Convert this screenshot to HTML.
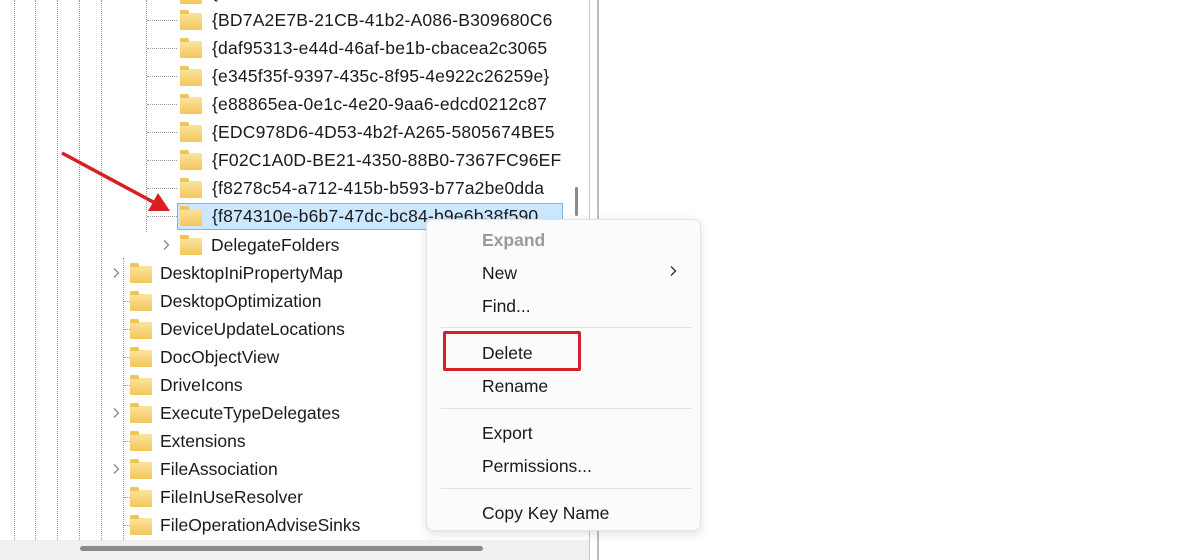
<!DOCTYPE html>
<html><head><style>
*{margin:0;padding:0;box-sizing:border-box}
body{width:1200px;height:560px;overflow:hidden;background:#fff;position:relative;font-family:"Liberation Sans",sans-serif;color:#1a1a1a}
.vl{position:absolute;top:0;width:0;border-left:1px dotted #9a9a9a}
.row{position:absolute;height:28px;line-height:28px;font-size:17.5px;white-space:nowrap}
.f{position:absolute;width:22px;height:17px;background:linear-gradient(#fbe3a0,#f3c75a);border-radius:1px}
.f:before{content:"";position:absolute;left:0;top:-3px;width:9px;height:4px;background:#f0c45a;border-radius:1px 2px 0 0}
.hl{position:absolute;height:0;border-top:1px dotted #9a9a9a;width:12px}
.chev{position:absolute;width:8px;height:12px}
.menu{position:absolute;left:426px;top:219px;width:275px;height:312px;background:#fbfbfb;border:1px solid #e4e4e4;border-radius:7px;box-shadow:0 3px 10px rgba(0,0,0,.12)}
.mi{position:absolute;left:55px;font-size:17.5px}
.sep{position:absolute;left:14px;right:8px;height:1px;background:#e2e2e2}
</style></head><body>
<div class="vl" style="left:14px;height:540px"></div>
<div class="vl" style="left:35px;height:540px"></div>
<div class="vl" style="left:57px;height:540px"></div>
<div class="vl" style="left:79px;height:540px"></div>
<div class="vl" style="left:101px;height:540px"></div>
<div class="vl" style="left:123px;top:258px;height:282px"></div>
<div class="vl" style="left:146px;height:232px"></div>

<div id="tree"></div>
<script>
var L2=["{BD7A2E7B-21CB-41b2-A086-B309680C6","{daf95313-e44d-46af-be1b-cbacea2c3065","{e345f35f-9397-435c-8f95-4e922c26259e}","{e88865ea-0e1c-4e20-9aa6-edcd0212c87","{EDC978D6-4D53-4b2f-A265-5805674BE5","{F02C1A0D-BE21-4350-88B0-7367FC96EF","{f8278c54-a712-415b-b593-b77a2be0dda","{f874310e-b6b7-47dc-bc84-b9e6b38f590"];
var L1=["DesktopIniPropertyMap","DesktopOptimization","DeviceUpdateLocations","DocObjectView","DriveIcons","ExecuteTypeDelegates","Extensions","FileAssociation","FileInUseResolver","FileOperationAdviseSinks"];
var chev1={0:1,5:1,7:1};
var C='<svg class="chev" viewBox="0 0 8 12" style="left:LEFTpx;top:TOPpx"><path d="M2 1.5 L6.5 6 L2 10.5" fill="none" stroke="#888" stroke-width="1.3"/></svg>';
var h="";
h+='<div class="f" style="left:180px;top:-13px"></div><div class="row" style="left:212px;top:-22px">{</div>';
for(var i=0;i<8;i++){var y=6+i*28;
 h+='<div class="hl" style="left:147px;top:'+(y+14)+'px;width:30px"></div>';
 if(i==7)h+='<div style="position:absolute;left:177px;top:'+(y+1)+'px;width:386px;height:27px;background:#cce8ff;border:1px solid #7fb4dd"></div>';
 h+='<div class="f" style="left:180px;top:'+(y+7)+'px"></div>';
 h+='<div class="row" style="left:212px;top:'+y+'px;width:351px;overflow:hidden;letter-spacing:0.2px">'+L2[i]+'</div>';}
var y=231;
h+=C.replace('LEFT',162).replace('TOP',y+8)+'<div class="f" style="left:180px;top:'+(y+7)+'px"></div><div class="row" style="left:211px;top:'+y+'px">DelegateFolders</div>';
for(var i=0;i<10;i++){var y=259+i*28;
 if(chev1[i])h+=C.replace('LEFT',112).replace('TOP',y+8);else h+='<div class="hl" style="left:124px;top:'+(y+14)+'px;width:6px"></div>';
 h+='<div class="f" style="left:130px;top:'+(y+7)+'px"></div><div class="row" style="left:160px;top:'+y+'px">'+L1[i]+'</div>';}
document.getElementById('tree').innerHTML=h;
</script>

<div style="position:absolute;left:0;top:540px;width:590px;height:20px;background:#f0f0f0"></div>
<div style="position:absolute;left:80px;top:546px;width:403px;height:5px;background:#8a8a8a;border-radius:3px"></div>
<div style="position:absolute;left:575px;top:187px;width:3px;height:29px;background:#8a8a8a;border-radius:2px"></div>
<div style="position:absolute;left:589px;top:0;width:1px;height:560px;background:#c8c8c8"></div>
<div style="position:absolute;left:597px;top:0;width:2px;height:560px;background:#bdbdbd"></div>

<svg style="position:absolute;left:0;top:0" width="200" height="240">
<line x1="62" y1="153" x2="155" y2="203" stroke="#d82020" stroke-width="3.5"/>
<polygon points="170,211 148,211 158,193" fill="#d82020"/>
</svg>

<div class="menu">
<div class="mi" style="top:10px;color:#9a9a9a;font-weight:bold">Expand</div>
<div class="mi" style="top:43px">New</div>
<svg style="position:absolute;left:242px;top:45px" width="8" height="12" viewBox="0 0 8 12"><path d="M2 1.5 L6.5 6 L2 10.5" fill="none" stroke="#333" stroke-width="1.4"/></svg>
<div class="mi" style="top:76px">Find...</div>
<div class="sep" style="top:107px"></div>
<div class="mi" style="top:123px">Delete</div>
<div class="mi" style="top:156px">Rename</div>
<div class="sep" style="top:188px"></div>
<div class="mi" style="top:203px">Export</div>
<div class="mi" style="top:236px">Permissions...</div>
<div class="sep" style="top:268px"></div>
<div class="mi" style="top:283px">Copy Key Name</div>
</div>
<div style="position:absolute;left:443px;top:331px;width:138px;height:40px;border:3px solid #d3202a;border-radius:2px"></div>
</body></html>
